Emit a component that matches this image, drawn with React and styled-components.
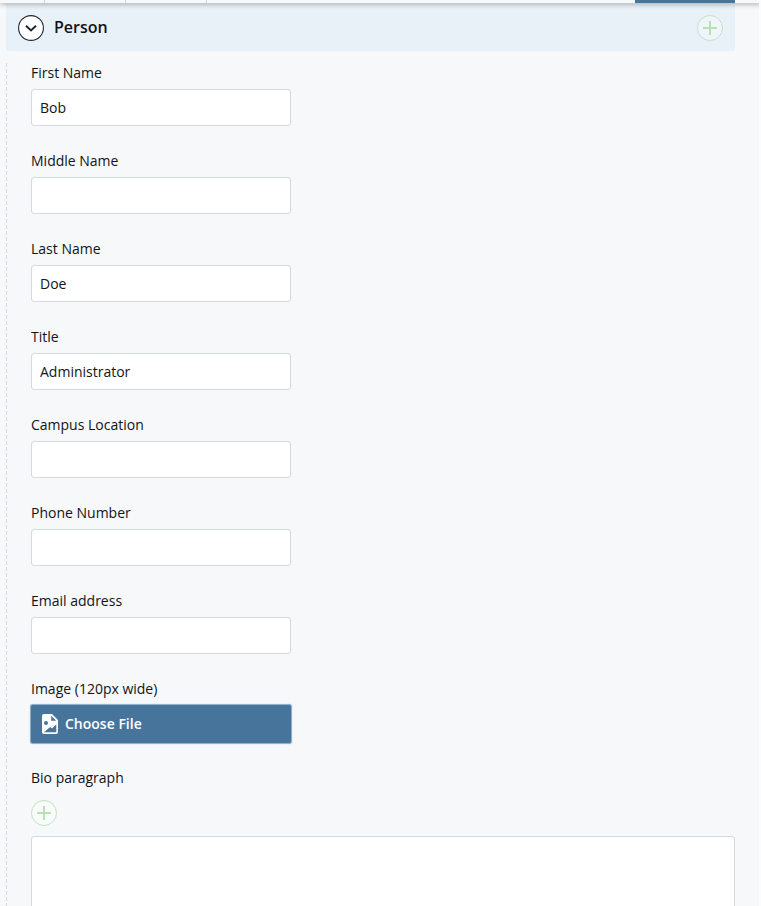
import React from "react";
import styled, { createGlobalStyle } from "styled-components";

const GlobalStyle = createGlobalStyle`
  *, *::before, *::after { box-sizing: border-box; }
  body {
    margin: 0;
    background: #f6f8fa;
    color: #111418;
    font: 14px/20px "Open Sans", sans-serif;
  }
`;

const Page = styled.main`
  display: flex;
  flex-direction: column;
  height: 100vh;
  overflow: hidden;
  border-right: 2px solid #fbfcfd;
`;

const TabBar = styled.nav`
  position: relative;
  z-index: 1;
  display: flex;
  flex: none;
  height: 3px;
  padding-right: 26px;
  margin-right: -2px;
  background: #f6f8fa;
  box-shadow: 0 1px 5px rgba(0, 0, 0, 0.4);
`;

const Tab = styled.span`
  width: ${(p) => p.$width}px;
  border-right: 1px solid #d0d6dc;
`;

const ActiveTab = styled.span`
  width: 100px;
  margin-left: auto;
  background: #47749b;
`;

const Group = styled.section`
  margin: 0 24px 0 6px;
`;

const GroupHeader = styled.header`
  display: flex;
  align-items: center;
  gap: 10px;
  height: 48px;
  padding: 2px 12px 0;
  background: #e8f1f8;
  border-radius: 0 0 3px 3px;
`;

const GroupTitle = styled.h2`
  flex: 1;
  margin: 0;
  padding-bottom: 2px;
  font-size: 16px;
  line-height: 24px;
  font-weight: 600;
`;

const RoundButton = styled.button`
  display: block;
  flex: none;
  width: 26px;
  height: 26px;
  padding: 0;
  border: 0;
  border-radius: 50%;
  background: transparent;
  cursor: pointer;

  svg { display: block; }
`;

const GroupBody = styled.div`
  margin-top: 12px;
  padding: 0 0 24px 25px;
  background: repeating-linear-gradient(to bottom, #d5dade 0 4px, transparent 4px 6px)
    left top / 1px 100% no-repeat;
`;

const Field = styled.div`
  display: flex;
  flex-direction: column;
  align-items: flex-start;
  gap: 6px;
  margin-bottom: 25px;
`;

const FileField = styled(Field)`
  gap: 5px;
  margin-bottom: 24px;
`;

const Label = styled.label`
  line-height: 20px;
`;

const TextInput = styled.input`
  width: 260px;
  max-width: 100%;
  height: 37px;
  padding: 0 8px;
  border: 1px solid #d5dade;
  border-radius: 3px;
  background: #fff;
  color: inherit;
  font: inherit;
`;

const FileButton = styled.button`
  display: flex;
  align-items: center;
  gap: 7px;
  width: 262px;
  max-width: 100%;
  height: 40px;
  margin-left: -1px;
  padding: 0 11px;
  border: 1px solid #8fb0cc;
  border-radius: 3px;
  box-shadow: 0 0 1px #8fb0cc;
  background: #47749b;
  color: #fff;
  font: 600 14px/20px "Open Sans", sans-serif;
  cursor: pointer;
`;

const BioField = styled.div`
  display: flex;
  flex-direction: column;
  align-items: flex-start;
`;

const BioTools = styled.div`
  padding: 12px 0 10px;
`;

const BioText = styled.textarea`
  width: 100%;
  height: 160px;
  padding: 8px;
  border: 1px solid #d0d9e2;
  border-radius: 3px;
  background: #fff;
  color: inherit;
  font: inherit;
  resize: none;
`;

function PlusIcon() {
  return (
    <svg width="26" height="26" viewBox="0 0 26 26" fill="none" aria-hidden="true">
      <circle cx="13" cy="13" r="12.5" fill="#fff" fillOpacity="0.3" stroke="#bfe5bf" />
      <path d="M13 6v14M6 13h14" stroke="#b8e2b5" strokeWidth="2" />
    </svg>
  );
}

function ChevronIcon() {
  return (
    <svg width="26" height="26" viewBox="0 0 26 26" fill="none" aria-hidden="true">
      <circle cx="13" cy="13" r="12.4" fill="#fff" stroke="#20262d" strokeWidth="1.1" />
      <path d="M8 10.8l5 4.7 5-4.7" stroke="#20262d" strokeWidth="2" />
    </svg>
  );
}

function ImageFileIcon() {
  return (
    <svg width="16" height="20" viewBox="0 0 16 20" aria-hidden="true">
      <path
        fill="#fff"
        fillRule="evenodd"
        d="M2 0h8l6 6v12a2 2 0 0 1-2 2H2a2 2 0 0 1-2-2V2a2 2 0 0 1 2-2zM9.2 1.8v5h5zM4 7a2 2 0 1 0 0 4 2 2 0 0 0 0-4zM2 18.3h12.3v-8l-4.2 4.2-2-1.6z"
      />
    </svg>
  );
}

const fields = [
  { id: "first-name", label: "First Name", value: "Bob" },
  { id: "middle-name", label: "Middle Name", value: "" },
  { id: "last-name", label: "Last Name", value: "Doe" },
  { id: "title", label: "Title", value: "Administrator" },
  { id: "campus", label: "Campus Location", value: "" },
  { id: "phone", label: "Phone Number", value: "" },
  { id: "email", label: "Email address", value: "" },
];

export default function App() {
  return (
    <>
      <GlobalStyle />
      <Page>
        <TabBar>
          <Tab $width={45} />
          <Tab $width={81} />
          <Tab $width={81} />
          <ActiveTab />
        </TabBar>
        <Group>
          <GroupHeader>
            <RoundButton type="button" aria-label="Collapse Person">
              <ChevronIcon />
            </RoundButton>
            <GroupTitle>Person</GroupTitle>
            <RoundButton type="button" aria-label="Add person">
              <PlusIcon />
            </RoundButton>
          </GroupHeader>
          <GroupBody>
            {fields.map((f) => (
              <Field key={f.id}>
                <Label htmlFor={f.id}>{f.label}</Label>
                <TextInput id={f.id} type="text" defaultValue={f.value} />
              </Field>
            ))}
            <FileField>
              <Label htmlFor="image">Image (120px wide)</Label>
              <FileButton id="image" type="button">
                <ImageFileIcon />
                Choose File
              </FileButton>
            </FileField>
            <BioField>
              <Label htmlFor="bio">Bio paragraph</Label>
              <BioTools>
                <RoundButton type="button" aria-label="Add bio paragraph">
                  <PlusIcon />
                </RoundButton>
              </BioTools>
              <BioText id="bio" />
            </BioField>
          </GroupBody>
        </Group>
      </Page>
    </>
  );
}
